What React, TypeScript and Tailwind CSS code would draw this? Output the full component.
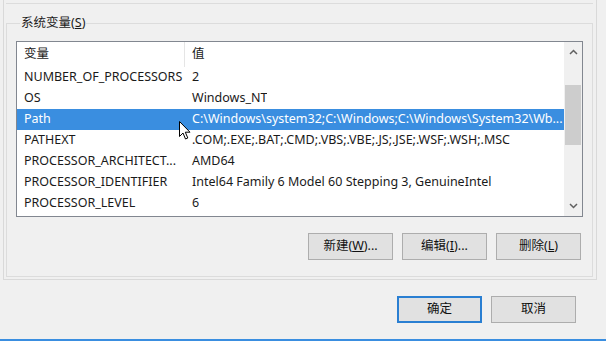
import React from 'react';

type Row = { name: string; value: string; selected?: boolean };

const rows: Row[] = [
  { name: 'NUMBER_OF_PROCESSORS', value: '2' },
  { name: 'OS', value: 'Windows_NT' },
  { name: 'Path', value: 'C:\\Windows\\system32;C:\\Windows;C:\\Windows\\System32\\Wb...', selected: true },
  { name: 'PATHEXT', value: '.COM;.EXE;.BAT;.CMD;.VBS;.VBE;.JS;.JSE;.WSF;.WSH;.MSC' },
  { name: 'PROCESSOR_ARCHITECT...', value: 'AMD64' },
  { name: 'PROCESSOR_IDENTIFIER', value: 'Intel64 Family 6 Model 60 Stepping 3, GenuineIntel' },
  { name: 'PROCESSOR_LEVEL', value: '6' },
];

const Btn: React.FC<{ children: React.ReactNode; primary?: boolean }> = ({ children, primary }) => (
  <button
    className={
      primary
        ? 'w-[85px] h-[27px] bg-[#e1e1e1] border-2 border-[#2a7fd2] text-[12.5px] text-[#111]'
        : 'w-[85px] h-[27px] bg-[#e1e1e1] border border-[#adadad] text-[12.5px] text-[#111]'
    }
  >
    {children}
  </button>
);

const Cursor = () => (
  <svg className="absolute left-[179px] top-[121px]" width="13" height="19" viewBox="0 0 13 19">
    <path
      d="M0.5 0.5 L0.5 15.5 L4 12 L6.5 18 L8.8 17 L6.3 11.2 L11 11.2 Z"
      fill="#fff"
      stroke="#000"
      strokeWidth="1"
      strokeLinejoin="miter"
    />
  </svg>
);

export default function App() {
  return (
    <div
      className="relative w-[606px] h-[341px] bg-[#f0f0f0] overflow-hidden text-[12.5px] text-[#1a1a1a]"
      style={{ fontFamily: '"Noto Sans", "Noto Sans CJK SC", sans-serif' }}
    >
      {/* tab page */}
      <div className="ml-[3px] w-[594px] h-[280px] border-l border-r border-b border-[#d9d9d9] pl-[2px] pr-[3px]">
        <div className="h-[4px] border-b border-[#dcdcdc]" />
        <fieldset className="mt-[12px] h-[261px] border border-[#dcdcdc] px-[9px] pt-0">
          <legend className="ml-[4px] px-[1px] leading-[14px] text-[12.5px]">
            系统变量(<span className="underline">S</span>)
          </legend>
          {/* list view */}
          <div className="mt-[11px] h-[176px] border border-[#828790] bg-white flex">
            <div className="flex-1 flex flex-col">
              <div className="h-[25px] flex items-center">
                <div className="w-[168px] h-full border-r border-[#e5e5e5] pl-[7px] flex items-center">变量</div>
                <div className="pl-[7px]">值</div>
              </div>
              {rows.map((r) => (
                <div
                  key={r.name}
                  className={
                    r.selected
                      ? 'h-[21px] flex items-center bg-[#3a8ee0] text-white whitespace-nowrap'
                      : 'h-[21px] flex items-center whitespace-nowrap'
                  }
                >
                  <div className="w-[168px] pl-[7px] overflow-hidden">{r.name}</div>
                  <div className="pl-[7px] overflow-hidden">{r.value}</div>
                </div>
              ))}
            </div>
            {/* scrollbar */}
            <div className="w-[18px] bg-[#f0f0f0] flex flex-col items-center">
              <div className="h-[20px] flex items-center justify-center">
                <svg width="9" height="6" viewBox="0 0 9 6">
                  <path d="M1 5 L4.5 1.5 L8 5" fill="none" stroke="#606060" strokeWidth="1.5" />
                </svg>
              </div>
              <div className="mt-[23px] w-[16px] h-[60px] bg-[#cdcdcd]" />
              <div className="flex-1" />
              <div className="h-[20px] flex items-center justify-center">
                <svg width="9" height="6" viewBox="0 0 9 6">
                  <path d="M1 1 L4.5 4.5 L8 1" fill="none" stroke="#606060" strokeWidth="1.5" />
                </svg>
              </div>
            </div>
          </div>
          <div className="mt-[16px] flex justify-end gap-[9px] pr-[2px]">
            <Btn>
              新建(<span className="underline">W</span>)...
            </Btn>
            <Btn>
              编辑(<span className="underline">I</span>)...
            </Btn>
            <Btn>
              删除(<span className="underline">L</span>)
            </Btn>
          </div>
        </fieldset>
      </div>
      {/* dialog buttons */}
      <div className="mt-[16px] flex gap-[9px] pl-[397px]">
        <Btn primary>确定</Btn>
        <Btn>取消</Btn>
      </div>
      <div className="absolute left-0 right-0 bottom-0 h-[2px] bg-[#3a8ee0]" />
      <Cursor />
    </div>
  );
}
